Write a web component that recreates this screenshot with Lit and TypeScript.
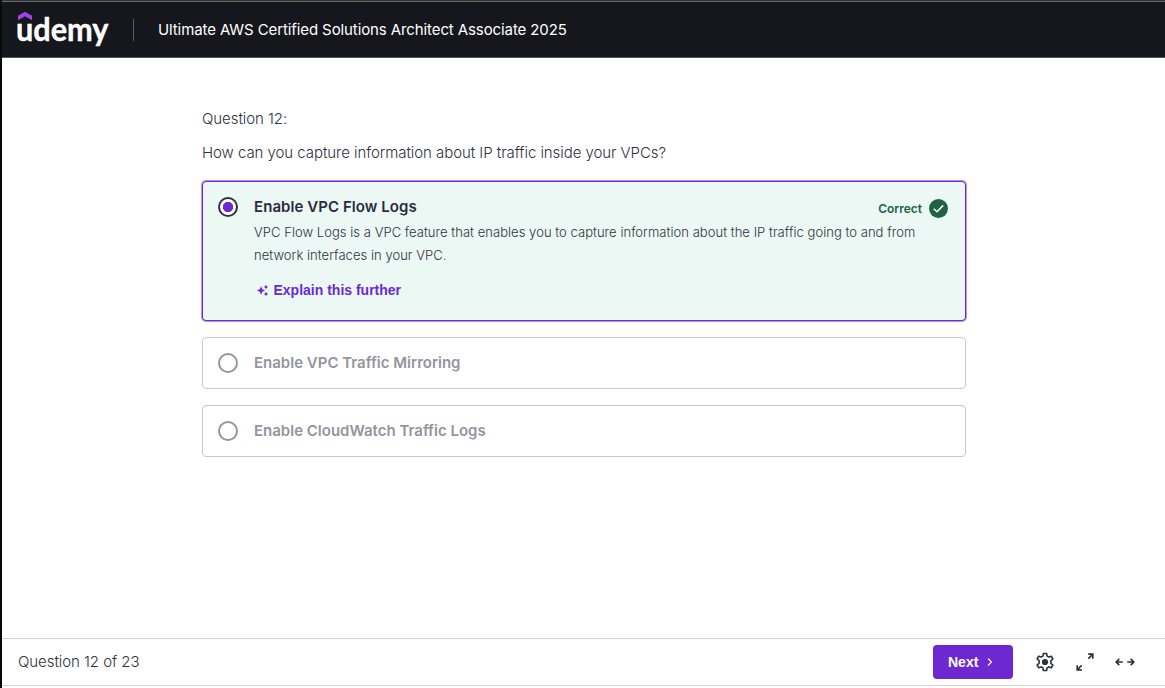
import { LitElement, html, css } from "lit";
import { customElement } from "lit/decorators.js";

@customElement("quiz-option")
class QuizOption extends LitElement {
  static properties = {
    label: { type: String },
    correct: { type: Boolean, reflect: true },
  };
  label = "";
  correct = false;
  static styles = css`
    :host { display: block; }
    .card {
      box-sizing: border-box;
      display: flex;
      gap: 16px;
      min-height: 52px;
      border: 1px solid #c7c8ce;
      border-radius: 4px;
      padding: 15px 17px 15px 15px;
      background: #fff;
    }
    .card.correct {
      min-height: 140px;
      padding: 15px 17px 0 15px;
      border-color: #6d28d2;
      background: #ebf8f4;
      box-shadow: 0 0 0 1px #b794e8;
    }
    .radio {
      box-sizing: border-box;
      flex: none;
      width: 20px;
      height: 20px;
      border: 2px solid #94959d;
      border-radius: 50%;
      background: #fff;
    }
    .card.correct .radio {
      border-color: #303141;
      background: radial-gradient(circle, #6d28d2 4.8px, #fff 5.5px);
    }
    .body { flex: 1; min-width: 0; }
    .head { display: flex; justify-content: space-between; height: 20px; }
    .label {
      font-size: 15px;
      line-height: 20px;
      font-weight: 600;
      color: #94959d;
      white-space: nowrap;
    }
    .card.correct .label { color: #2a2b3f; letter-spacing: 0.06px; }
    .badge {
      display: flex;
      align-items: center;
      gap: 7px;
      height: 23px;
      font-size: 12px;
      font-weight: 600;
      color: #206344;
    }
    .badge svg { width: 19px; height: 19px; }
  `;
  render() {
    return html`<div class="card ${this.correct ? "correct" : ""}">
      <span class="radio"></span>
      <div class="body">
        <div class="head">
          <span class="label">${this.label}</span>
          ${this.correct
            ? html`<span class="badge">Correct
                <svg viewBox="0 0 19 19"><circle cx="9.5" cy="9.5" r="9.5" fill="#206344" />
                  <path d="M4.800 9.700 8 12.700 14.200 6.400" fill="none" stroke="#fff" stroke-width="1.500" /></svg>
              </span>`
            : ""}
        </div>
        <slot></slot>
      </div>
    </div>`;
  }
}

@customElement("app-root")
class AppRoot extends LitElement {
  static styles = css`
    :host {
      box-sizing: border-box;
      display: flex;
      flex-direction: column;
      height: 688px;
      border-left: 2px solid #080808;
      background: #fff;
      color: #303141;
      font-family: Inter, "Liberation Sans", sans-serif;
      font-size: 15px;
      font-weight: 300;
    }
    header {
      box-sizing: border-box;
      display: flex;
      align-items: center;
      height: 58px;
      flex: none;
      border-top: 1px solid #333;
      border-bottom: 1px solid #55565e;
      box-shadow: inset 0 1px #6a6a6c;
      background: #16161d;
      color: #fff;
    }
    .logo { width: 96px; height: 56px; margin-left: 14px; }
    .sep { width: 1px; height: 22px; margin: 2px 24px 0 21px; background: #5b5c65; }
    h1 {
      margin: 2px 0 0;
      font-size: 15px;
      line-height: 20px;
      font-weight: 400;
      letter-spacing: -0.1px;
      white-space: nowrap;
    }
    main { flex: 1; width: 764px; margin-left: 200px; }
    .line { margin: 0; line-height: 24px; letter-spacing: -0.06px; white-space: nowrap; }
    .number { margin-top: 49px; }
    .question { margin-top: 10px; margin-bottom: 16px; }
    quiz-option + quiz-option { margin-top: 16px; }
    .explain { margin: 4px 0 0; font-size: 13px; line-height: 23px; letter-spacing: 0.04px; white-space: nowrap; }
    .further {
      display: flex;
      align-items: center;
      gap: 4.500px;
      margin: 13px 0 0 2px;
      font: bold 14px/20px "Liberation Sans", sans-serif;
      color: #6d28d2;
    }
    .further svg { width: 13px; height: 13px; }
    footer {
      box-sizing: border-box;
      display: flex;
      align-items: center;
      height: 48px;
      margin-bottom: 2px;
      padding: 0 30px 0 16px;
      border-top: 1px solid #d1d2e0;
      border-bottom: 1px solid #d1d2e0;
    }
    .progress { flex: 1; padding-bottom: 2px; letter-spacing: -0.06px; }
    .next {
      display: flex;
      align-items: center;
      box-sizing: border-box;
      width: 80px;
      height: 34px;
      gap: 7px;
      margin-right: 22px;
      padding: 0 0 0 15px;
      border: 0;
      border-radius: 4px;
      background: #6d28d2;
      color: #fff;
      font: bold 14px "Liberation Sans", sans-serif;
    }
    .tool { width: 20px; height: 20px; margin-right: 20px; }
    .tool:last-child { margin-right: 0; }
  `;
  render() {
    return html`
      <header>
        <svg class="logo" viewBox="0 0 96 56">
          <text x="0" y="39.500" textLength="92.500" lengthAdjust="spacingAndGlyphs" font-family="Lato" font-weight="700" font-size="32" fill="#fff" stroke="#fff" stroke-width="0.400">udemy</text>
          <path d="M2 14.800 9 10.800l7 4v4.400l-7-4-7 4z" fill="#a040ee" />
        </svg>
        <span class="sep"></span>
        <h1>Ultimate AWS Certified Solutions Architect Associate 2025</h1>
      </header>
      <main>
        <p class="line number">Question 12:</p>
        <p class="line question">How can you capture information about IP traffic inside your VPCs?</p>
        <quiz-option label="Enable VPC Flow Logs" correct>
          <p class="explain">VPC Flow Logs is a VPC feature that enables you to capture information about the IP traffic going to and from<br />network interfaces in your VPC.</p>
          <div class="further">
            <svg viewBox="0 0 13 13" fill="#6d28d2">
              <path d="M5 2.300 6.300 5.200 9.200 6.500 6.300 7.800 5 10.700 3.700 7.800 0.800 6.500 3.700 5.200z" />
              <path d="M10 .8l.8 1.400 1.400.8-1.400.8L10 5.200l-.8-1.400L7.800 3l1.400-.8zM10 7.800l.8 1.400 1.400.8-1.400.8L10 12.200l-.8-1.400L7.800 10l1.400-.8z" />
            </svg>
            Explain this further
          </div>
        </quiz-option>
        <quiz-option label="Enable VPC Traffic Mirroring"></quiz-option>
        <quiz-option label="Enable CloudWatch Traffic Logs"></quiz-option>
      </main>
      <footer>
        <span class="progress">Question 12 of 23</span>
        <button class="next">Next
          <svg width="10" height="10" viewBox="0 0 10 10"><path d="M3 1.500 6.500 5 3 8.500" fill="none" stroke="#fff" stroke-width="1.100" /></svg>
        </button>
        <svg class="tool" viewBox="0 0 20 20" fill="none" stroke="#303141" stroke-width="1.600" stroke-linejoin="round">
          <path d="M8.400 1.500h3.200l.5 2.600 1.700 1 2.500-.9 1.600 2.800-2 1.700v2.600l2 1.700-1.600 2.800-2.500-.9-1.700 1-.5 2.600H8.400l-.5-2.600-1.700-1-2.500.9L2.100 13l2-1.700V8.700L2.100 7l1.600-2.800 2.500.9 1.700-1z" />
          <circle cx="10" cy="10" r="3.100" fill="#303141" stroke="none" />
        </svg>
        <svg class="tool" viewBox="0 0 20 20" fill="none" stroke="#303141" stroke-width="1.700">
          <path d="M13.200 2.200h4.600v4.600M17.500 2.500 13.300 6.700M6.800 17.800H2.200v-4.600M2.500 17.500l4.200-4.200" />
        </svg>
        <svg class="tool" viewBox="0 0 20 20" fill="none" stroke="#303141" stroke-width="1.700">
          <path d="M4.300 6.800 1.200 10l3.100 3.200M1.200 10h6.600M15.700 6.800l3.100 3.200-3.100 3.200M18.800 10h-6.600" />
        </svg>
      </footer>
    `;
  }
}
